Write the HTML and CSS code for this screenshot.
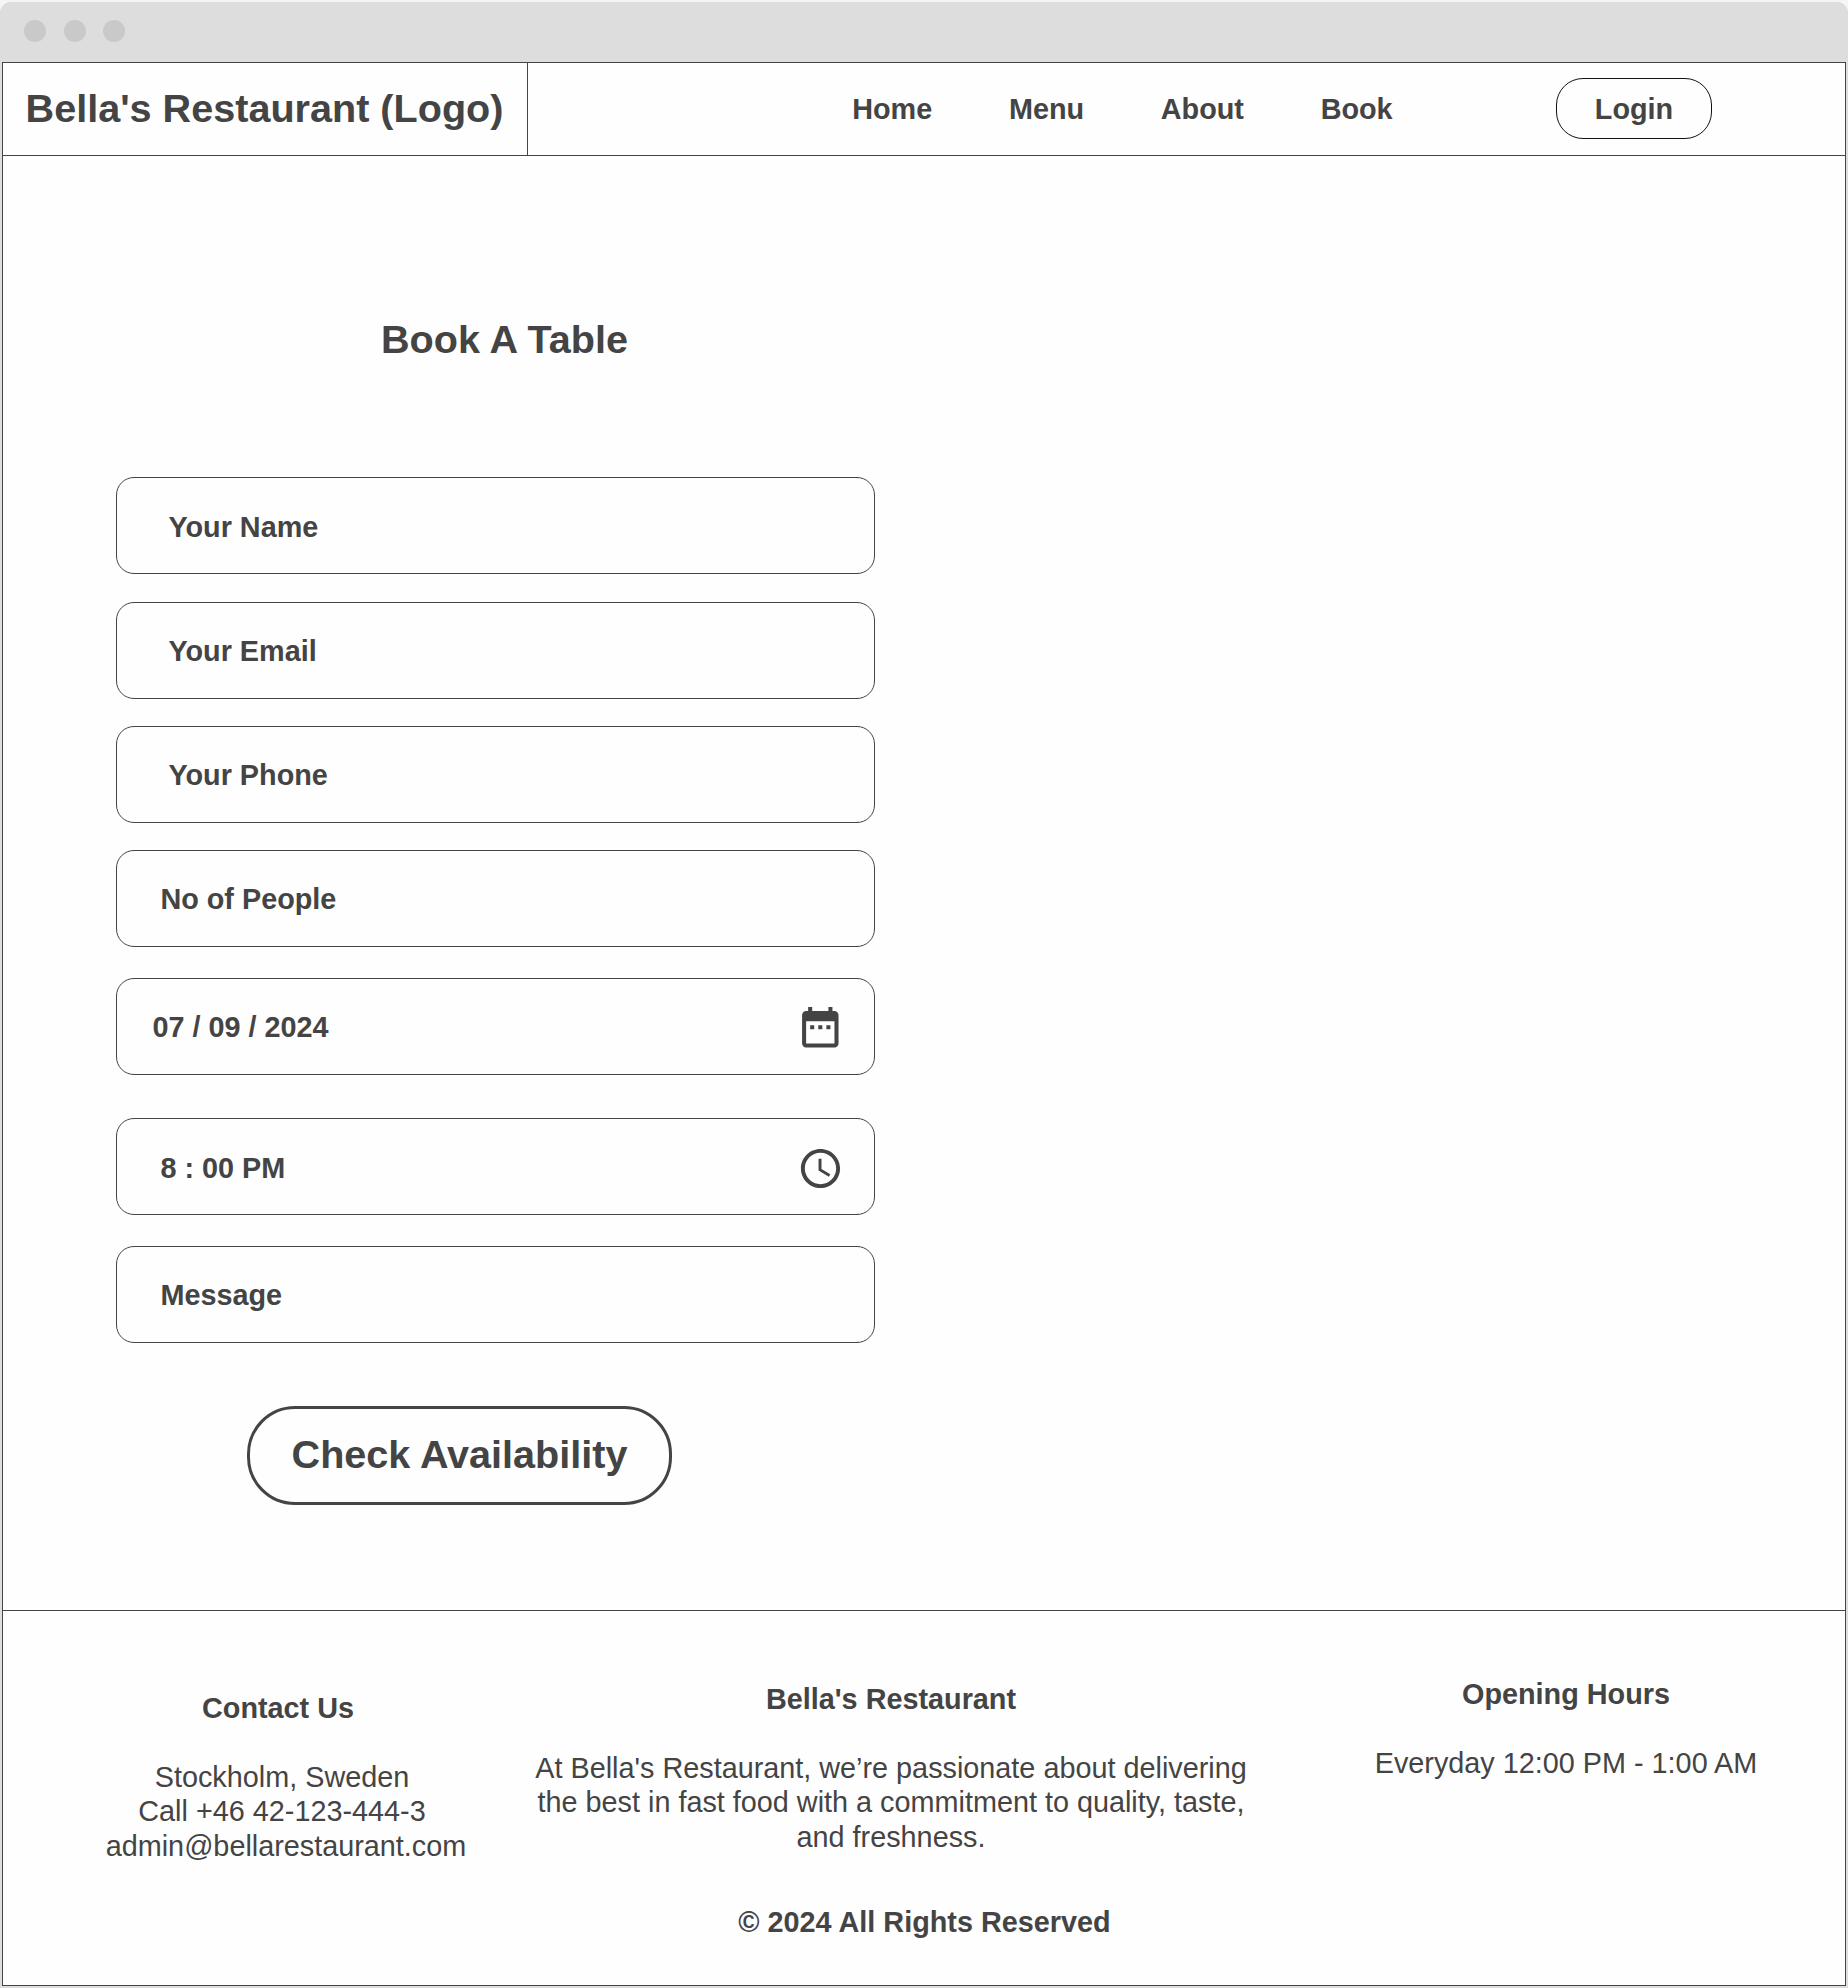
FILE: index.html
```html
<!DOCTYPE html>
<html lang="en">
<head>
<meta charset="utf-8">
<title>Bella's Restaurant - Book A Table</title>
<link rel="stylesheet" href="styles.css">
</head>
<body>
<div class="window">
  <div class="titlebar"><span class="dot"></span><span class="dot"></span><span class="dot"></span></div>
  <div class="page">
    <header class="header">
      <div class="logo">Bella's Restaurant (Logo)</div>
      <nav class="nav">
        <a>Home</a><a>Menu</a><a>About</a><a>Book</a>
      </nav>
      <button class="login">Login</button>
    </header>
    <main class="main">
      <h1 class="title">Book A Table</h1>
      <form class="form">
        <div class="field field-name">Your Name</div>
        <div class="field field-wide">Your Email</div>
        <div class="field field-wide">Your Phone</div>
        <div class="field field-people">No of People</div>
        <div class="field field-date">07 / 09 / 2024
          <svg class="icon-date" viewBox="0 0 24 24"><path d="M9 11H7v2h2v-2zm4 0h-2v2h2v-2zm4 0h-2v2h2v-2zm2-7h-1V2h-2v2H8V2H6v2H5c-1.11 0-1.99.9-1.99 2L3 20c0 1.1.89 2 2 2h14c1.1 0 2-.9 2-2V6c0-1.1-.9-2-2-2zm0 16H5V9h14v11z"/></svg>
        </div>
        <div class="field field-time">8 : 00 PM
          <svg class="icon-time" viewBox="0 0 24 24"><path d="M11.99 2C6.47 2 2 6.48 2 12s4.47 10 9.99 10C17.52 22 22 17.52 22 12S17.52 2 11.99 2zM12 20c-4.42 0-8-3.58-8-8s3.58-8 8-8 8 3.58 8 8-3.58 8-8 8zm.5-13H11v6l5.25 3.15.75-1.23-4.5-2.67z"/></svg>
        </div>
        <div class="field">Message</div>
        <button class="submit" type="button">Check Availability</button>
      </form>
    </main>
    <footer class="footer">
      <div class="columns">
        <section class="contact">
          <h2>Contact Us</h2>
          <p class="line">Stockholm, Sweden</p>
          <p class="line">Call +46 42-123-444-3</p>
          <p>admin@bellarestaurant.com</p>
        </section>
        <section class="about">
          <h2>Bella's Restaurant</h2>
          <p>At Bella's Restaurant, we’re passionate about delivering<br>the best in fast food with a commitment to quality, taste,<br>and freshness.</p>
        </section>
        <section class="hours">
          <h2>Opening Hours</h2>
          <p>Everyday 12:00 PM - 1:00 AM</p>
        </section>
      </div>
      <div class="copyright">© 2024 All Rights Reserved</div>
    </footer>
  </div>
</div>
</body>
</html>
```
FILE: styles.css
```css
* { box-sizing: border-box; }

body {
  margin: 0;
  background: #f5f5f5;
  color: #444;
  font: 28.8px/34.56px "Liberation Sans", Arial, sans-serif;
}

h1, h2, p { margin: 0; }

.window {
  width: 1848px;
  height: 1988px;
  padding: 2px 0 0;
  display: flex;
  flex-direction: column;
}

.titlebar {
  height: 60px;
  padding: 18px 0 0 24px;
  display: flex;
  gap: 17.5px;
  background: #ddd;
  border-radius: 11px 11px 0 0;
}

.dot {
  width: 22px;
  height: 22px;
  border-radius: 50%;
  background: #c9c9c9;
}

.page {
  height: 1926px;
  border: 2px solid #ddd;
  border-top: 0;
  background: #444;
  padding: 1px;
  display: flex;
  flex-direction: column;
  gap: 1px;
}

.header {
  height: 92px;
  background: #fefefe;
  display: flex;
}

.logo {
  width: 525px;
  padding: 21.5px 0 0 22.6px;
  border-right: 1px solid #444;
  font-size: 39.6px;
  font-weight: bold;
  line-height: 47.52px;
  white-space: nowrap;
}

.nav {
  width: 1028px;
  padding: 29px 0 0 324.2px;
  display: flex;
  gap: 76.7px;
  font-weight: bold;
}

button {
  color: #444;
  font-family: inherit;
  font-weight: bold;
  background: #fefefe;
  white-space: nowrap;
}

.login {
  width: 156px;
  height: 61px;
  margin-top: 15px;
  padding: 1px 0 0;
  border: 1px solid #111;
  border-radius: 27px;
  font-size: 28.8px;
  line-height: 34.56px;
}

.main {
  height: 1454px;
  padding: 159.5px 0 0 113px;
  background: #fefefe;
}

.title {
  padding-left: 265px;
  font-size: 39.6px;
  line-height: 47.5px;
}

.form {
  margin-top: 114px;
  width: 759px;
}

.field {
  position: relative;
  height: 97px;
  margin-bottom: 27px;
  padding: 31px 0 0 43.4px;
  border: 1px solid #444;
  border-radius: 18px;
  font-weight: bold;
}

.field-name { padding: 32px 0 0 51.4px; margin-bottom: 28px; }
.field-wide { padding-left: 51.4px; }
.field-people { margin-bottom: 31px; }
.field-date { padding-left: 35.4px; margin-bottom: 43px; }
.field-time { padding-top: 32px; margin-bottom: 31px; }

.icon-date, .icon-time { position: absolute; fill: #444; }
.icon-date { right: 29px; top: 24px; width: 48.6px; height: 48.6px; }
.icon-time { right: 30.5px; top: 26px; width: 47px; height: 47px; }

.submit {
  display: block;
  width: 425px;
  height: 99px;
  margin: 63px 0 0 131px;
  padding: 0 0 2px;
  border: 3px solid #444;
  border-radius: 48px;
  font-size: 39.6px;
  line-height: 47.5px;
}

.footer {
  height: 374px;
  background: #fefefe;
  text-align: center;
}

.columns {
  height: 294px;
  display: flex;
}

.footer h2 {
  margin-bottom: 34.56px;
  font-size: 28.8px;
  line-height: 34.56px;
}

.contact { width: 516px; padding: 79.5px 0 0 50px; }
.contact h2 { padding-right: 16px; }
.contact .line { padding-right: 8px; }
.about { width: 744px; padding-top: 70.5px; }
.hours { width: 582px; padding: 66px 0 0 24px; }

.copyright { padding-left: 1px; font-weight: bold; }
```
